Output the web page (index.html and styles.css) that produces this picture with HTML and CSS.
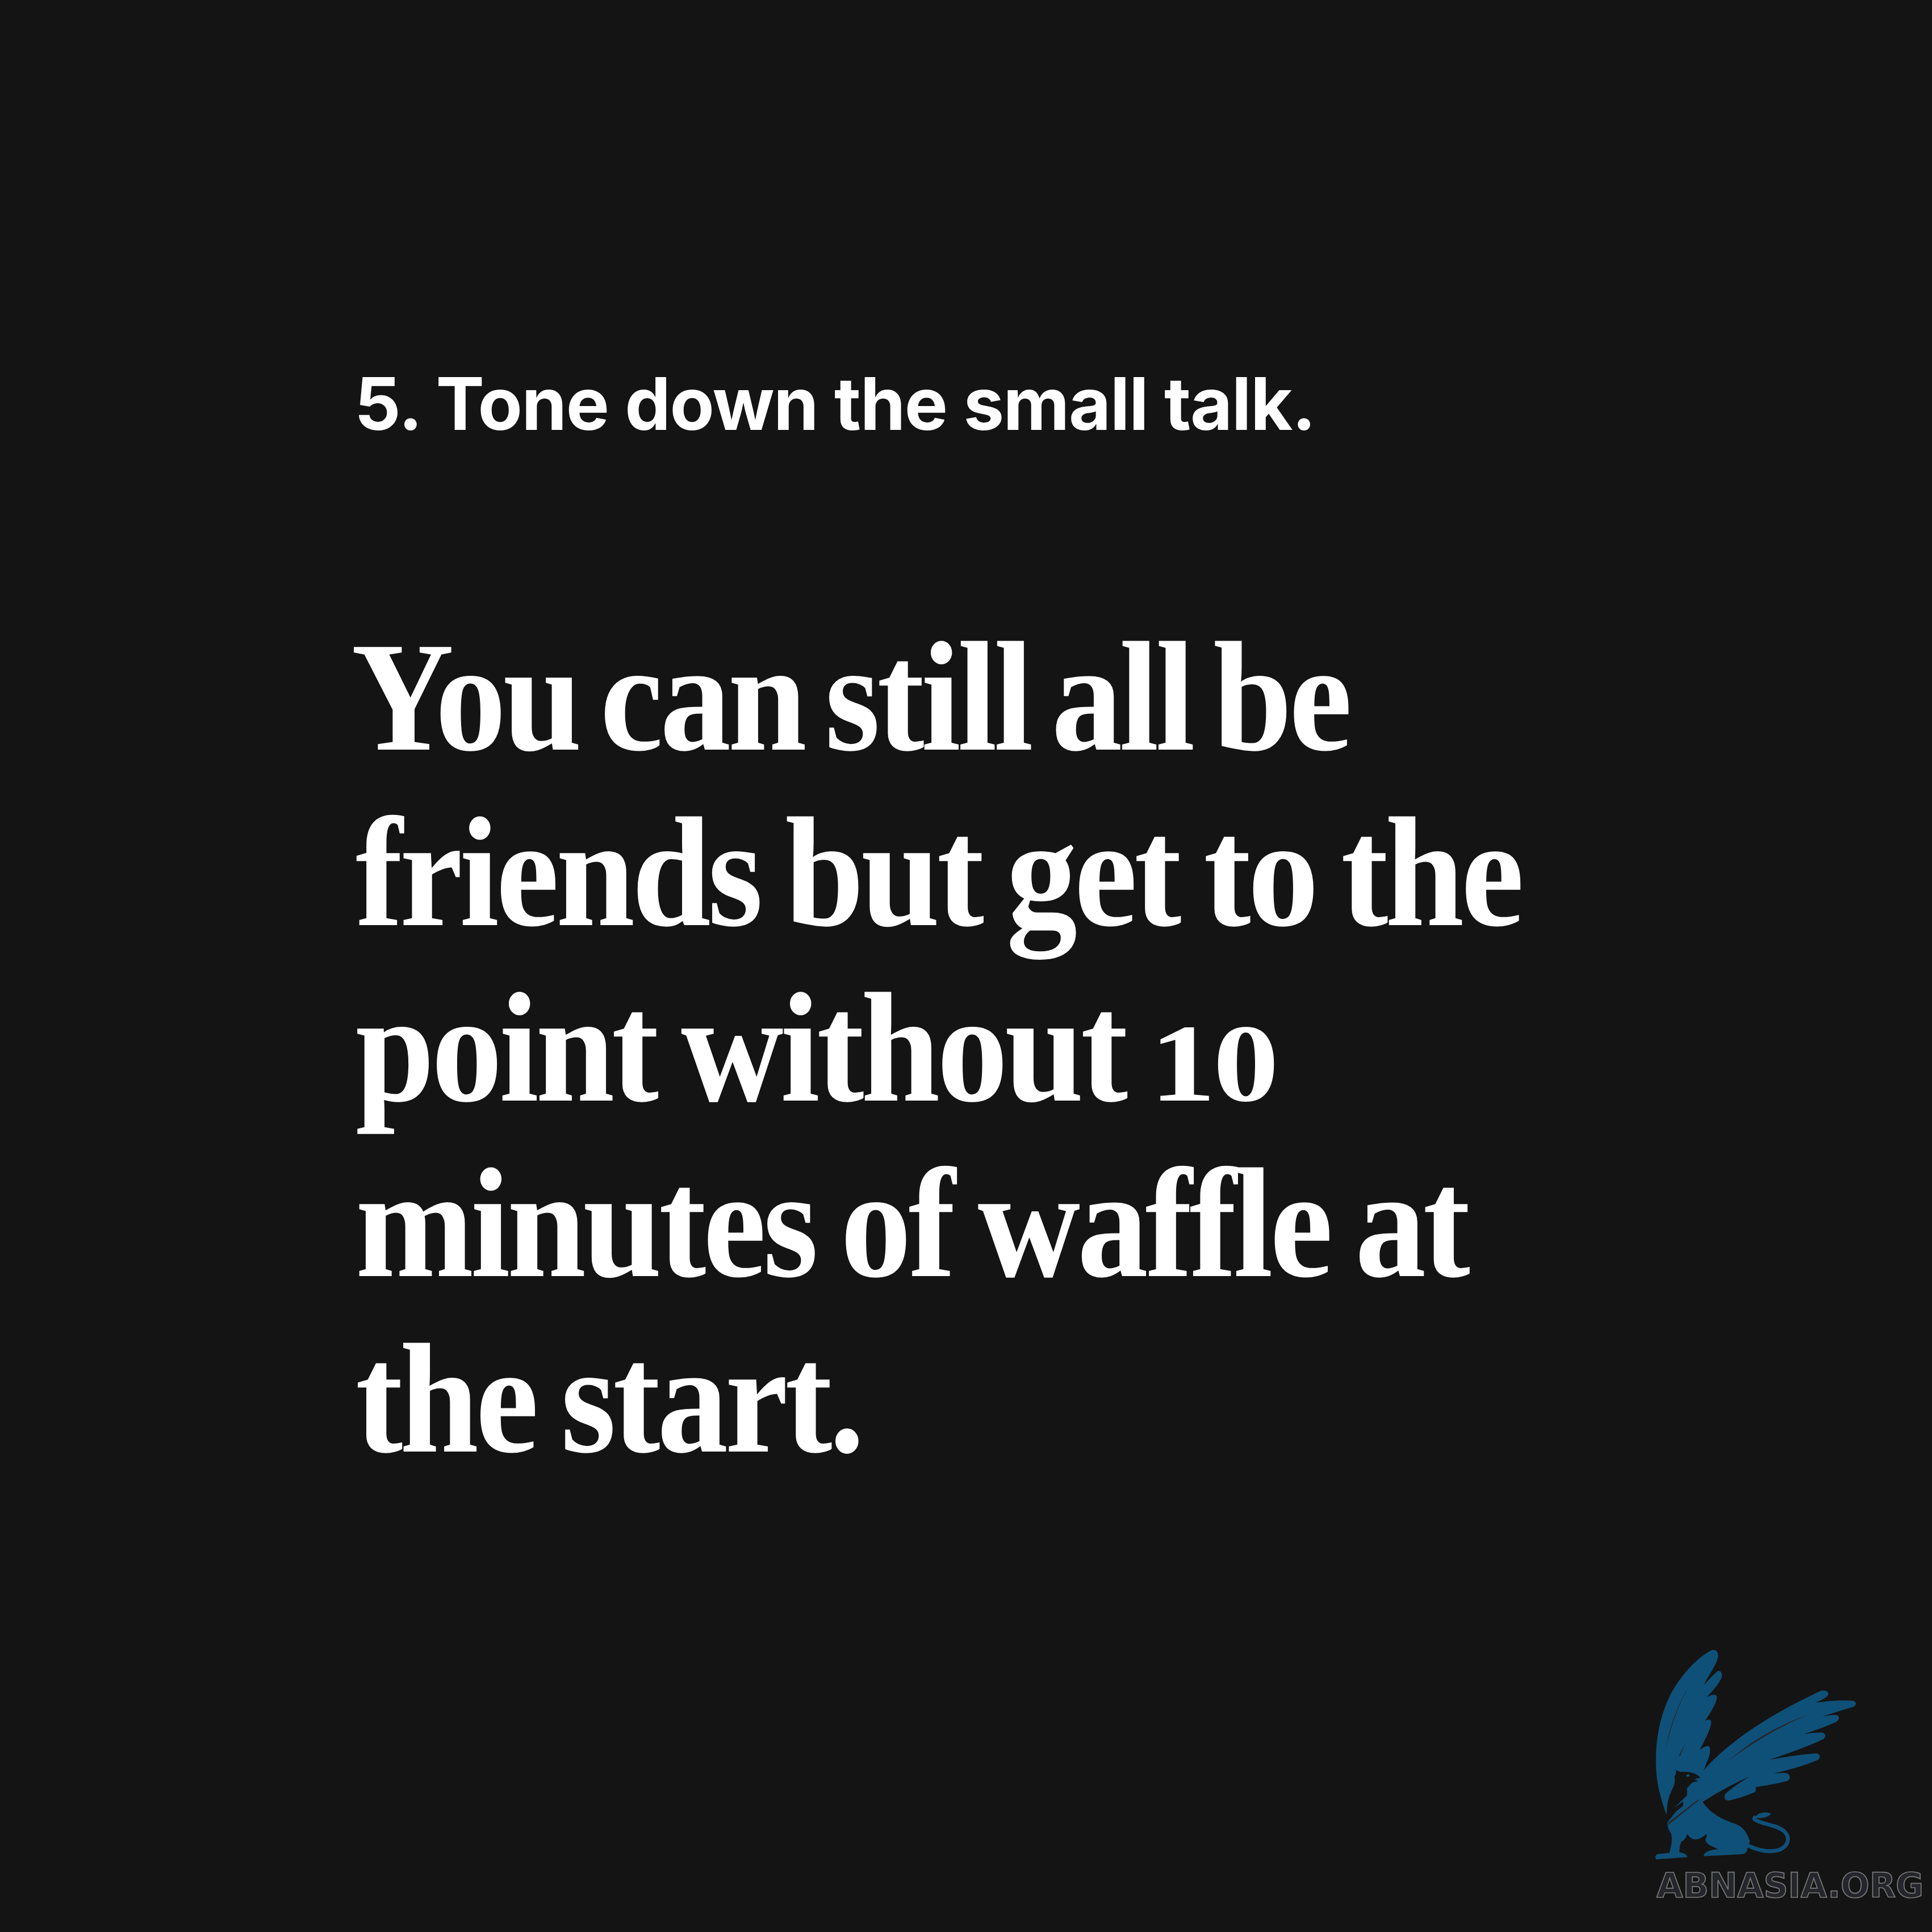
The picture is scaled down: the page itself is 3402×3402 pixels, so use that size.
FILE: index.html
```html
<!DOCTYPE html>
<html lang="en">
<head>
<meta charset="utf-8">
<title>Tone down the small talk</title>
<link rel="stylesheet" href="styles.css">
</head>
<body>
<main class="slide">
<h2 class="kicker">5. Tone down the small talk.</h2>
<p class="quote"><span class="first-line">You can still all be</span><br>friends but get to the<br>point without <span class="oldstyle">10</span><br>minutes of waffle at<br>the start.</p>
<svg class="logo" viewBox="0 0 1568 1568" aria-label="ABNASIA.ORG logo">
<path class="griffin" d="M215 970C185 880 165 820 162 720C158 590 180 470 240 350C290 260 370 170 445 132C470 125 482 145 478 170C465 215 430 260 405 310C430 285 460 250 478 238C495 235 502 255 495 275C480 310 445 345 420 372C440 362 465 352 472 368C475 395 440 450 412 492C420 488 438 480 443 495C445 530 410 590 385 640C400 630 420 615 432 622C445 640 432 680 420 705L405 745C450 690 530 620 620 555C720 485 850 410 1000 340C1030 335 1045 345 1038 362C1025 378 995 390 975 400C1040 390 1110 385 1165 390C1185 395 1185 415 1165 422C1120 435 1060 455 1010 470C1040 465 1075 458 1088 465C1100 478 1092 492 1075 500C1020 525 960 545 915 560C950 555 995 550 1012 553C1030 560 1028 578 1010 587C930 625 830 660 740 690C810 678 920 660 980 658C1000 662 1002 682 985 692C920 720 830 745 760 760C790 758 825 755 835 762C850 775 845 795 825 800C770 815 720 822 670 830C672 845 672 855 660 858C620 875 570 892 530 898C512 898 506 880 515 865C550 830 600 800 640 775C560 810 470 860 400 905C425 945 470 985 560 1015C605 1030 625 1060 640 1105L630 1135C625 1155 625 1170 600 1172L405 1182C405 1165 425 1150 480 1146C440 1130 410 1115 415 1095C420 1080 425 1070 415 1072C385 1100 345 1110 322 1068C315 1085 310 1100 290 1108C283 1130 280 1150 282 1162C305 1165 320 1172 322 1187L165 1198C152 1190 160 1172 175 1170L230 1165C240 1130 248 1090 238 1065C225 1050 220 1030 220 1010L262 956L300 925L300 903L255 935L320 872L320 835L345 808L378 798L355 790L388 782C375 765 350 755 320 752C300 752 280 755 262 742C266 755 265 765 255 775C262 785 258 810 250 830C235 860 218 900 218 950Z"/>
<path class="griffin-tail" d="M635 1130C680 1150 740 1165 790 1150C835 1130 850 1090 815 1055C780 1025 720 1020 685 1005C665 997 658 992 665 985"/>
<path class="griffin" d="M665 985C680 960 715 952 750 965C730 985 700 992 665 985Z"/>
<path class="slit" d="M332 315C280 400 240 510 212 635C232 520 270 410 332 315Z"/>
<path class="slit" d="M310 605L285 675L280 668Z"/>
<path class="slit" d="M935 462C780 515 640 600 530 695C650 610 790 520 935 462Z"/>
<path class="slit" d="M385 893L222 1025L225 1010L375 895Z"/>
<ellipse class="griffin" cx="325" cy="771" rx="9" ry="6"/>
<text class="wordmark" x="165" y="1392" textLength="1360" lengthAdjust="spacingAndGlyphs">ABNASIA.ORG</text>
</svg>
</main>
</body>
</html>
```
FILE: styles.css
```css
html,body{margin:0;padding:0;background:#141414}
.slide{width:3402px;height:3402px;box-sizing:border-box;padding:634px 0 0 626px;background:#141414;color:#fff;position:relative;overflow:hidden}
.kicker{margin:0 0 0 -2px;font:700 128px/1.2 Inter,sans-serif;letter-spacing:-1.5px}
.quote{margin:285px 0 0;font:700 276px/309px "Liberation Serif",serif;letter-spacing:-6px;word-spacing:-14px;transform:scaleX(.906);transform-origin:left top}
.first-line{margin-left:-8px;word-spacing:-22px}
.oldstyle{display:inline-block;font-size:194px;line-height:0;letter-spacing:-4px;transform:scaleX(1.32);transform-origin:left center}
.logo{position:absolute;left:2860px;top:2860px;width:542px;height:542px}
.griffin{fill:#0f5078}
.griffin-tail{fill:none;stroke:#0f5078;stroke-width:20;stroke-linecap:round}
.slit{fill:#23272e}
.wordmark{font:700 176px "DejaVu Sans",sans-serif;fill:#25262b;stroke:#7a7a7a;stroke-width:5}
```
